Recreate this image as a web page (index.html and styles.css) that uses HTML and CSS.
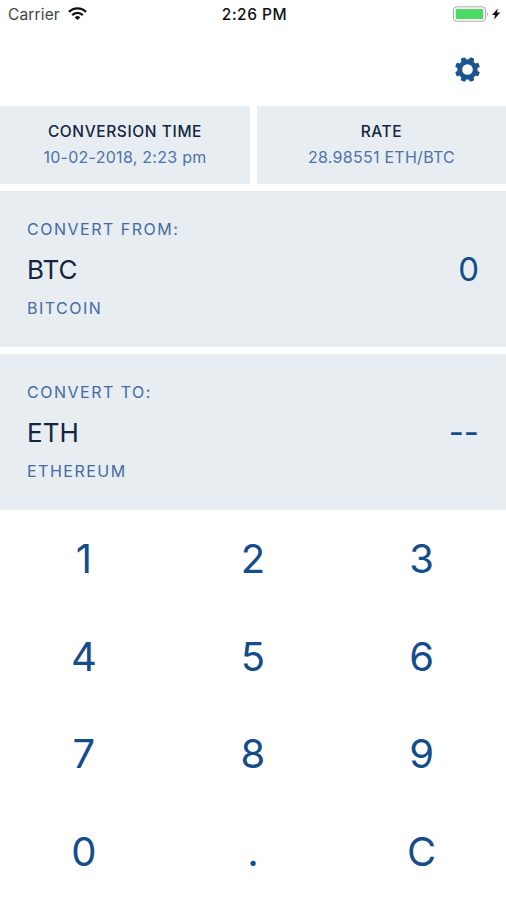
FILE: index.html
```html
<!DOCTYPE html>
<html lang="en">
<head>
<meta charset="utf-8">
<title>Converter</title>
<link rel="stylesheet" href="styles.css">
</head>
<body>
<div class="app">
  <header class="status">
    <div class="carrier"><span>Carrier</span>
      <svg class="wifi" viewBox="0 0 19 13"><g fill="none" stroke="#111" stroke-width="2.4"><path d="M1 4.9a12 12 0 0 1 17 0"/><path d="M4.2 8.1a7.5 7.5 0 0 1 10.6 0"/></g><path d="M6.7 10.4a4 4 0 0 1 5.6 0L9.5 13z" fill="#111"/></svg>
    </div>
    <div class="clock">2:26 PM</div>
    <svg class="battery" viewBox="0 0 48 16"><rect x=".5" y=".8" width="32" height="14.4" rx="3.2" fill="#fff" stroke="#aaa"/><rect x="2.7" y="3" width="27.6" height="10" rx="1" fill="#4cd964"/><path d="M34 6q2.4 2 0 4z" fill="#aaa"/><path d="M44.8 2.4L39 8.9h3L41.2 13.6l6-7H44z" fill="#111"/></svg>
  </header>
  <div class="toolbar">
    <svg class="gear" viewBox="0 0 24 24"><g fill="#1d5390" transform="rotate(22.5 12 12)"><rect x="9.6" y="0" width="4.8" height="24" rx="1.4"/><rect x="9.6" y="0" width="4.8" height="24" rx="1.4" transform="rotate(45 12 12)"/><rect x="9.6" y="0" width="4.8" height="24" rx="1.4" transform="rotate(90 12 12)"/><rect x="9.6" y="0" width="4.8" height="24" rx="1.4" transform="rotate(135 12 12)"/><circle cx="12" cy="12" r="9.7"/></g><circle cx="12" cy="12" r="5.1" fill="#fff"/></svg>
  </div>
  <section class="info">
    <div class="cell"><h2>CONVERSION TIME</h2><p>10-02-2018, 2:23 pm</p></div>
    <div class="cell"><h2>RATE</h2><p>28.98551 ETH/BTC</p></div>
  </section>
  <section class="panel">
    <div class="label">CONVERT FROM:</div>
    <div class="row"><span class="code">BTC</span><span class="value">0</span></div>
    <div class="name">BITCOIN</div>
  </section>
  <section class="panel">
    <div class="label">CONVERT TO:</div>
    <div class="row"><span class="code">ETH</span><span class="value">--</span></div>
    <div class="name">ETHEREUM</div>
  </section>
  <section class="keys">
    <button>1</button><button>2</button><button>3</button>
    <button>4</button><button>5</button><button>6</button>
    <button>7</button><button>8</button><button>9</button>
    <button>0</button><button>.</button><button>C</button>
  </section>
</div>
</body>
</html>
```
FILE: styles.css
```css
* { box-sizing: border-box; margin: 0; }
body { background: #fff; font-family: Inter, sans-serif; color: #154c8a; }
.app { width: 506px; height: 900px; overflow: hidden; }
.status { height: 28px; padding: 0 5px 0 8px; display: grid; grid-template-columns: 1fr auto 1fr; align-items: center; color: #111; font-size: 15px; }
.carrier { display: flex; align-items: center; gap: 8px; color: #444; font-size: 15.5px; letter-spacing: .15px; }
.wifi { width: 19px; height: 13px; margin-top: -1px; }
.clock { font-weight: 500; font-size: 15.5px; letter-spacing: .5px; }
.battery { width: 48px; height: 16px; justify-self: end; }
.toolbar { height: 78px; padding: 29px 26px 0 0; display: flex; justify-content: flex-end; }
.gear { width: 25px; height: 25px; }
.info { display: grid; grid-template-columns: 250px 249px; gap: 7px; height: 78px; margin-bottom: 7px; text-align: center; }
.cell { background: #e7edf1; padding-top: 15px; }
.cell h2 { font-size: 15.5px; line-height: 22px; font-weight: 500; letter-spacing: .6px; color: #13263f; }
.cell p { font-size: 16px; line-height: 22px; margin-top: 3px; letter-spacing: .27px; font-weight: 380; color: #4f73a8; }
.panel { height: 156px; margin-bottom: 7px; padding: 27px 27px 0; background: #e7edf1; }
.label, .name { font-size: 16px; line-height: 22px; letter-spacing: 1.5px; font-weight: 380; color: #446aa2; }
.row { display: flex; justify-content: space-between; align-items: center; height: 36px; margin: 11px 0 10px; }
.code { font-size: 26px; color: #13263f; }
.value { font-size: 33px; font-weight: 380; }
.keys { display: grid; grid-template-columns: repeat(3, 1fr); grid-auto-rows: 97.7px; margin-top: -7px; }
.keys button { border: 0; background: none; padding: 0; font: 380 40px/98px Inter, sans-serif; color: #154c8a; }
.keys button:nth-child(3n+1) { padding-right: 1px; }
```
